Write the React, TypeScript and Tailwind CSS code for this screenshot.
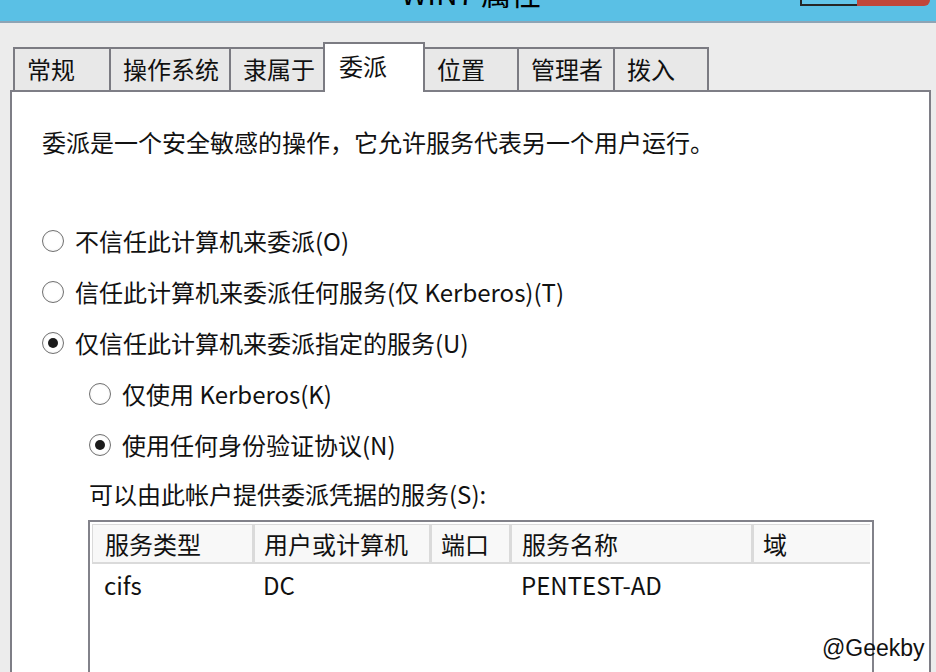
const cjk = { fontFamily: '"Noto Sans CJK SC", "Noto Sans", sans-serif' };

type Tab = { label: string; w: string; active?: boolean };

const tabs: Tab[] = [
  { label: '常规', w: 'w-[96px]' },
  { label: '操作系统', w: 'w-[120px]' },
  { label: '隶属于', w: 'w-[94px]' },
  { label: '委派', w: 'w-[102px]', active: true },
  { label: '位置', w: 'w-[92px]' },
  { label: '管理者', w: 'w-[96px]' },
  { label: '拨入', w: 'w-[96px]' },
];

function Radio({ checked, label }: { checked?: boolean; label: string }) {
  return (
    <div className="flex h-[51px] items-center">
      <span className="flex h-[22px] w-[22px] items-center justify-center rounded-full border-[1.5px] border-[#707070] bg-[radial-gradient(circle,#ffffff_55%,#e6e6e6)]">
        {checked && <span className="h-[10px] w-[10px] rounded-full bg-[#1b1b1b]" />}
      </span>
      <span className="ml-[11px] leading-[30px]">{label}</span>
    </div>
  );
}

const cols = [
  { label: '服务类型', w: 'w-[162px] pl-[12px]', val: 'cifs' },
  { label: '用户或计算机', w: 'w-[177px] pl-[9px]', val: 'DC' },
  { label: '端口', w: 'w-[80px] pl-[9px]', val: '' },
  { label: '服务名称', w: 'w-[242px] pl-[10px]', val: 'PENTEST-AD' },
  { label: '域', w: 'flex-1 pl-[9px]', val: '' },
];

export default function App() {
  return (
    <div className="relative h-[672px] w-[936px] overflow-hidden bg-[#ececec] text-[24px] text-[#111]" style={cjk}>
      {/* title bar */}
      <div className="relative flex h-[21px] justify-center overflow-hidden bg-[#5ac0e5] pl-[6px]">
        <span className="-mt-[23px] text-[30px] leading-[30px] text-black">WIN7 属性</span>
        <div className="absolute left-[800px] top-0 h-[6px] w-[57px] border-b-2 border-l-2 border-[#262626] bg-[#63c6ea]" />
        <div className="absolute left-[857px] top-0 h-[6px] w-[73px] rounded-br-[6px] bg-[#c0463b]" />
      </div>
      <div className="h-[2px] bg-[#8ea4b5]" />

      {/* tabs */}
      <div className="mt-[19px] flex h-[48px] items-end pl-[13px]">
        {tabs.map((t, i) => {
          const afterActive = i > 0 && tabs[i - 1].active;
          const last = i === tabs.length - 1;
          if (t.active) {
            return (
              <div
                key={t.label}
                className={`relative z-10 -mb-[2px] h-[50px] ${t.w} border-x-2 border-t-2 border-[#7b7b82] bg-white pl-[14px] pt-[7px] leading-[30px]`}
              >
                {t.label}
              </div>
            );
          }
          return (
            <div
              key={t.label}
              className={`h-[43px] ${t.w} border-t-2 border-[#7b7b82] bg-[#e8e8e8] pl-[12px] pt-[5px] leading-[30px] ${afterActive ? '' : 'border-l-2'} ${last ? 'border-r-2' : ''}`}
            >
              {t.label}
            </div>
          );
        })}
      </div>

      {/* panel */}
      <div className="ml-[10px] h-[620px] w-[921px] border-2 border-[#7e7e86] bg-white pl-[30px] pt-[35px]">
        <p className="h-[30px] leading-[30px]">委派是一个安全敏感的操作，它允许服务代表另一个用户运行。</p>

        <div className="mt-[58px]">
          <Radio label="不信任此计算机来委派(O)" />
          <Radio label="信任此计算机来委派任何服务(仅 Kerberos)(T)" />
          <Radio checked label="仅信任此计算机来委派指定的服务(U)" />
          <div className="pl-[47px]">
            <Radio label="仅使用 Kerberos(K)" />
            <Radio checked label="使用任何身份验证协议(N)" />
            <div className="flex h-[48px] items-center leading-[30px]">可以由此帐户提供委派凭据的服务(S):</div>
          </div>
        </div>

        <div className="ml-[46px] mt-[2px] h-[200px] w-[786px] border-2 border-[#82828a] p-[2px]">
          <div className="flex h-[40px] border-b-2 border-t border-l border-[#dadada] bg-[#f8f8f8]">
            {cols.map((c, i) => (
              <div
                key={c.label}
                className={`flex items-center ${c.w} ${i < cols.length - 1 ? 'border-r-[3px] border-[#dadada]' : ''} leading-[30px]`}
              >
                {c.label}
              </div>
            ))}
          </div>
          <div className="flex h-[42px]">
            {cols.map((c) => (
              <div key={c.label} className={`flex items-center ${c.w} leading-[30px]`}>
                {c.val}
              </div>
            ))}
          </div>
        </div>
      </div>

      <span
        className="absolute left-[822px] top-[633px] text-[23px] leading-[30px] text-[#111]"
        style={{ fontFamily: '"Liberation Sans", Arial, sans-serif' }}
      >
        @Geekby
      </span>
    </div>
  );
}
